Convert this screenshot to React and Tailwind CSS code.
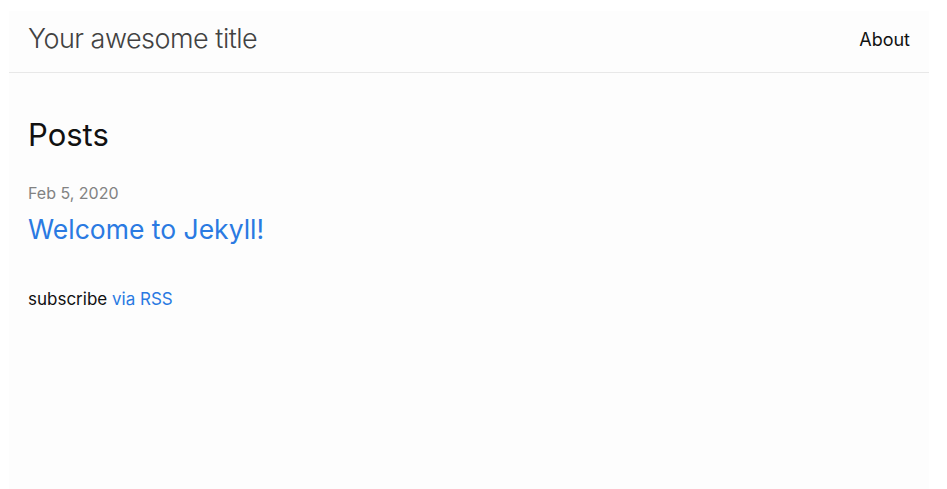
export default function App() {
  return (
    <div className="min-h-screen bg-white pt-[11px] pl-[9px]" style={{ fontFamily: "Inter, 'Liberation Sans', sans-serif" }}>
      <div className="w-[920px] min-h-[478px] bg-[#fdfdfd]">
        <header className="h-[62px] border-b border-[#e8e8e8] flex items-center justify-between px-[19px] pb-[4px]">
          <div className="text-[27px] font-light text-[#424242] tracking-[-0.5px]">Your awesome title</div>
          <a className="text-[18px] text-[#111]">About</a>
        </header>
        <main className="px-[19px] pt-[43px]">
          <h2 className="text-[31px] text-[#111] leading-[38px]">Posts</h2>
          <div className="mt-[30px] text-[16px] text-[#828282] leading-[18px]">Feb 5, 2020</div>
          <div className="mt-[11px] text-[26.5px] text-[#2a7ae2] leading-[32px]">Welcome to Jekyll!</div>
          <p className="mt-[42px] text-[17px] text-[#111]">
            subscribe <a className="text-[#2a7ae2]">via RSS</a>
          </p>
        </main>
      </div>
    </div>
  );
}
